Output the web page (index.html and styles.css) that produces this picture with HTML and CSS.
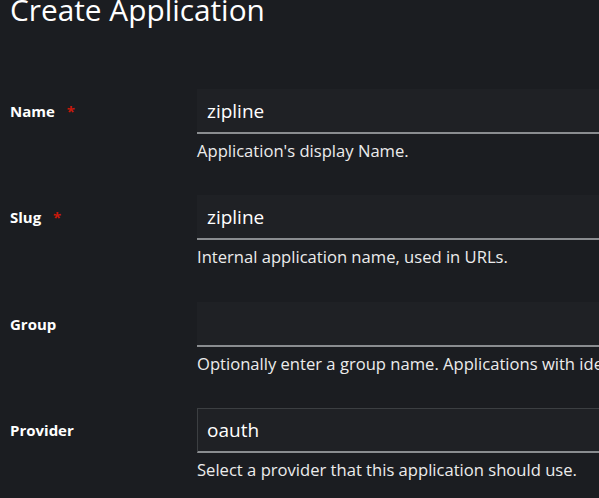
FILE: index.html
```html
<!DOCTYPE html>
<html lang="en">
<head>
<meta charset="utf-8">
<title>Create Application</title>
<link rel="stylesheet" href="styles.css">
</head>
<body>
<main class="page">
  <h1 class="title">Create Application</h1>
  <form class="form">
    <div class="group">
      <label class="label">Name <span class="req">*</span></label>
      <div class="control">
        <div class="input">zipline</div>
        <div class="helper">Application's display Name.</div>
      </div>
    </div>
    <div class="group">
      <label class="label">Slug <span class="req">*</span></label>
      <div class="control">
        <div class="input">zipline</div>
        <div class="helper">Internal application name, used in URLs.</div>
      </div>
    </div>
    <div class="group">
      <label class="label">Group</label>
      <div class="control">
        <div class="input"></div>
        <div class="helper">Optionally enter a group name. Applications with identical groups are shown grouped together.</div>
      </div>
    </div>
    <div class="group">
      <label class="label">Provider</label>
      <div class="control">
        <div class="input select">oauth</div>
        <div class="helper">Select a provider that this application should use.</div>
      </div>
    </div>
  </form>
</main>
</body>
</html>
```
FILE: styles.css
```css
html, body {
  margin: 0;
  padding: 0;
  background: #1b1d21;
  overflow: hidden;
}
body {
  width: 599px;
  height: 498px;
  font-family: "Open Sans", "Noto Sans", sans-serif;
  color: #e8e8e8;
}
.page {
  padding: 0 0 0 10px;
}
.title {
  margin: 0;
  font-size: 29.8px;
  font-weight: 400;
  line-height: 26px;
  color: #ffffff;
  margin-top: -3px;
}
.form {
  display: flex;
  flex-direction: column;
  gap: 33.3px;
  margin-top: 66px;
}
.group {
  display: grid;
  grid-template-columns: 187px 700px;
}
.label {
  font-size: 15px;
  font-weight: 700;
  line-height: 22px;
  padding-top: 11px;
  color: #ffffff;
}
.req {
  color: #c9190b;
  margin-left: 8px;
}
.input {
  box-sizing: border-box;
  height: 45px;
  background: #1f2125;
  border-bottom: 2px solid #8a8d90;
  padding: 0 10px;
  font-size: 19px;
  line-height: 45px;
  color: #ffffff;
}
.select {
  border: 1px solid #3c3f42;
  border-bottom: 2px solid #8a8d90;
  padding-left: 9px;
  line-height: 43px;
}
.helper {
  margin-top: 6px;
  font-size: 16.6px;
  line-height: 22px;
  white-space: nowrap;
  color: #ececec;
}
```
